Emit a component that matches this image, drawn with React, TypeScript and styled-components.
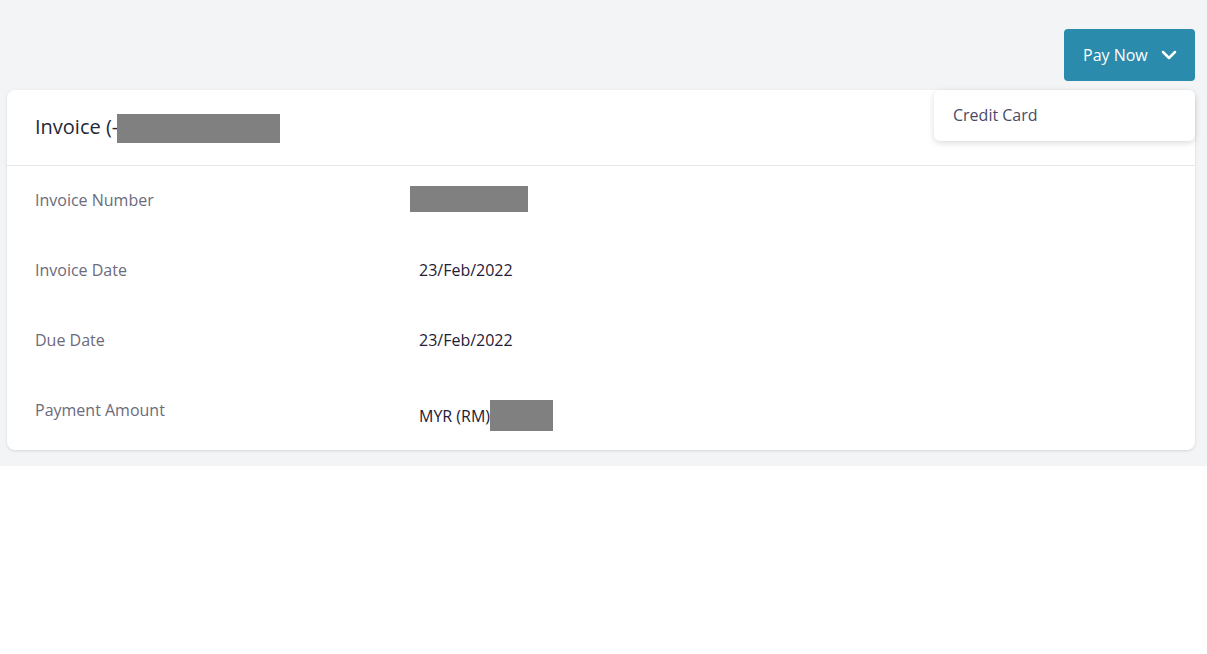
import React from "react";
import styled, { createGlobalStyle } from "styled-components";
import { ChevronDown } from "lucide-react";

const Global = createGlobalStyle`
  html, body { margin: 0; padding: 0; background: #ffffff; }
  body { font-family: "Open Sans", "Noto Sans", sans-serif; }
  * { box-sizing: border-box; }
`;

const Page = styled.div`
  background: #f3f4f6;
  padding: 29px 12px 16px 7px;
`;

const Toolbar = styled.div`
  display: flex;
  justify-content: flex-end;
  margin-bottom: 9px;
`;

const MenuWrap = styled.div`
  position: relative;
`;

const PayButton = styled.button`
  display: flex;
  align-items: center;
  gap: 9px;
  height: 52px;
  width: 131px;
  padding: 0 0 0 19px;
  border: none;
  border-radius: 4px;
  background: #2a8bac;
  color: #ffffff;
  font-family: "Open Sans", sans-serif;
  font-size: 16px;
  cursor: pointer;
`;

const Menu = styled.div`
  position: absolute;
  top: calc(100% + 9px);
  right: 0;
  width: 261px;
  height: 51px;
  background: #ffffff;
  border-radius: 6px;
  box-shadow: 0 2px 6px rgba(0, 0, 0, 0.14);
  display: flex;
  align-items: center;
  padding: 0 0 2px 19px;
  z-index: 10;
`;

const MenuItem = styled.div`
  font-size: 16px;
  color: #4a4a68;
`;

const Card = styled.div`
  background: #ffffff;
  border-radius: 8px;
  box-shadow: 0 1px 3px rgba(0, 0, 0, 0.12);
  padding-bottom: 4px;
`;

const CardHeader = styled.div`
  height: 76px;
  border-bottom: 1px solid #e5e7eb;
  display: flex;
  align-items: center;
  padding: 0 28px 1px;
`;

const Title = styled.h1`
  margin: 0;
  font-size: 20px;
  font-weight: 400;
  line-height: 30px;
  color: #1f2937;
  display: flex;
  align-items: center;
`;

const Redact = styled.span<{ $w: number; $h: number; $ml?: number; $mt?: number }>`
  display: inline-block;
  background: #808080;
  width: ${(p) => p.$w}px;
  height: ${(p) => p.$h}px;
  margin-left: ${(p) => p.$ml ?? 0}px;
  margin-top: ${(p) => p.$mt ?? 0}px;
`;

const Row = styled.div`
  display: grid;
  grid-template-columns: 384px 1fr;
  height: 70px;
  padding: 22px 28px 0;
  align-items: start;
`;

const Label = styled.div`
  font-size: 16px;
  line-height: 24px;
  color: #6b6b7b;
`;

const Value = styled.div<{ $mt?: number }>`
  display: flex;
  align-items: center;
  font-size: 16px;
  line-height: 24px;
  color: #1f2037;
  margin-top: ${(p) => p.$mt ?? 0}px;
`;

export default function App() {
  return (
    <>
      <Global />
      <Page>
        <Toolbar>
          <MenuWrap>
            <PayButton>
              Pay Now
              <ChevronDown size={24} strokeWidth={2.5} />
            </PayButton>
            <Menu>
              <MenuItem>Credit Card</MenuItem>
            </Menu>
          </MenuWrap>
        </Toolbar>
        <Card>
          <CardHeader>
            <Title>
              Invoice (-
              <Redact $w={163} $h={29} $ml={-1} $mt={3} />
            </Title>
          </CardHeader>
          <Row>
            <Label>Invoice Number</Label>
            <Value $mt={-2}>
              <Redact $w={118} $h={26} $ml={-9} />
            </Value>
          </Row>
          <Row>
            <Label>Invoice Date</Label>
            <Value>23/Feb/2022</Value>
          </Row>
          <Row>
            <Label>Due Date</Label>
            <Value>23/Feb/2022</Value>
          </Row>
          <Row>
            <Label>Payment Amount</Label>
            <Value $mt={2}>
              MYR (RM)
              <Redact $w={63} $h={31} />
            </Value>
          </Row>
        </Card>
      </Page>
    </>
  );
}
